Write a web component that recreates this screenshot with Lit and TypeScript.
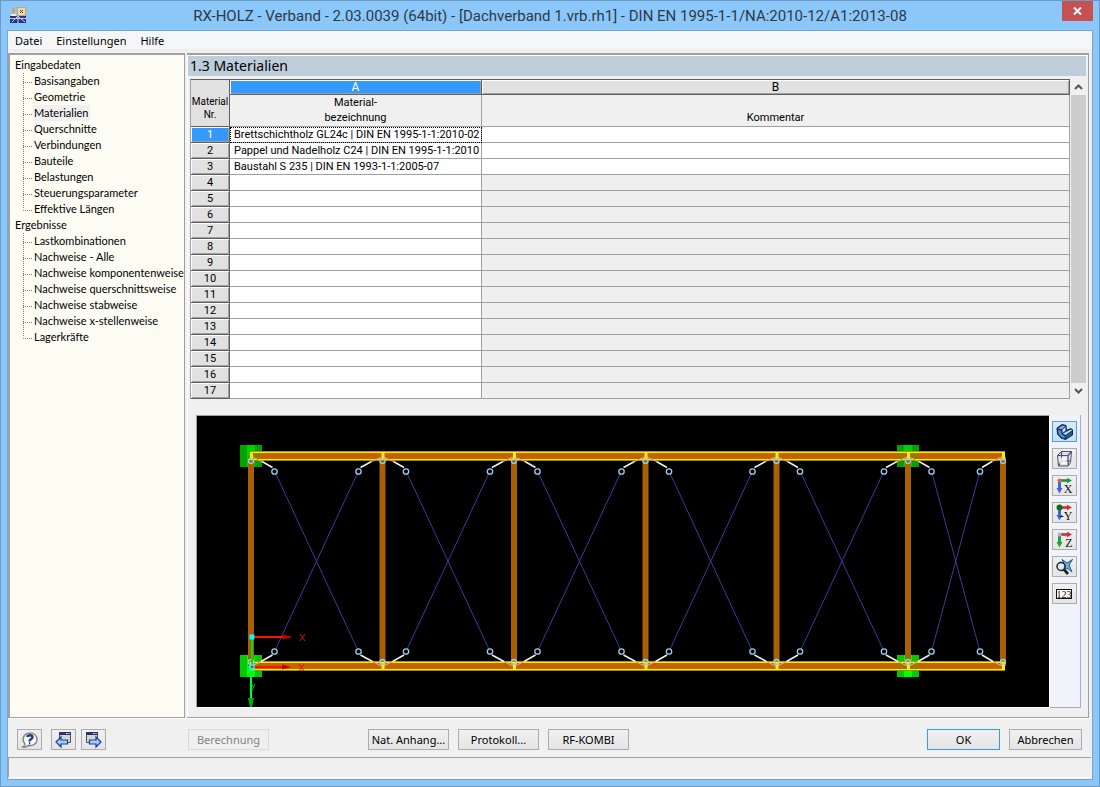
import { LitElement, html, css, svg } from "lit";
import { customElement, state } from "lit/decorators.js";

interface TreeGroup { label: string; items: string[]; }

const TREE: TreeGroup[] = [
  { label: "Eingabedaten", items: ["Basisangaben", "Geometrie", "Materialien", "Querschnitte", "Verbindungen", "Bauteile", "Belastungen", "Steuerungsparameter", "Effektive Längen"] },
  { label: "Ergebnisse", items: ["Lastkombinationen", "Nachweise - Alle", "Nachweise komponentenweise", "Nachweise querschnittsweise", "Nachweise stabweise", "Nachweise x-stellenweise", "Lagerkräfte"] },
];

const MATERIALS = [
  "Brettschichtholz GL24c | DIN EN 1995-1-1:2010-02",
  "Pappel und Nadelholz C24 | DIN EN 1995-1-1:2010",
  "Baustahl S 235 | DIN EN 1993-1-1:2005-07",
];
const ROW_COUNT = 17;

const axes = (down: string, right: string, origin: string, letter: string, originSize: number) => svg`
  <path d="M4.500 4V12" stroke=${down} stroke-width="3"/>
  <path d="M1.500 11h6l-3 5.500z" fill=${down}/>
  <path d="M5 3.500H13" stroke=${right} stroke-width="2.600"/>
  <path d="M12 .8v5.400l5-2.700z" fill=${right}/>
  <circle cx="4.500" cy="3.500" r=${originSize} fill=${origin}/>
  <text x="17.500" y="15.500" text-anchor="end" font-size="12" font-family="Liberation Serif, serif" fill="#111">${letter}</text>`;

const VIEW_TOOLS = [
  { label: "Volumenmodell", icon: svg`
    <path d="M2 5L7 1.500l4 1 .5 5 4.500-2 1.500 1.500v5L10.500 16.500 6 15 2.500 11z" fill="#1b3768" stroke="#14203c" stroke-linejoin="round"/>
    <path d="M3 5.500l4.500-3 3 .8-4 3z" fill="#7fb3e6"/>
    <path d="M7.500 6.500l3-2.200v3.500l-3 2z" fill="#c2e0fa"/>
    <path d="M8 10.500l8-4 1 1-6.500 4.500z" fill="#b4d8f8"/>
    <path d="M3 6.800l3 1 .5 3.500 3 1.700v2.500l-3-1.200-3-3.300z" fill="#4b8fd6"/>
    <path d="M11 13l6-4v2.500l-6 4z" fill="#2c5c9c"/>` },
  { label: "Drahtmodell", icon: svg`
    <path d="M6.500 1.500h10l-1 11-2.500 3.500h-9.500l-1-10.500z" fill="#dde2ec" stroke="#4c5365" stroke-linejoin="round"/>
    <path d="M2.500 5.500h10.500l.3 10.500M13 5.500l3.500-4M6.500 1.500v9.500M3.500 16l3-5h9" fill="none" stroke="#4c5365" stroke-width="1.200"/>
    <path d="M4.500 7.500h7v6.500h-6.500z" fill="#fff" opacity=".75"/>` },
  { label: "Ansicht in X", icon: axes("#3869d8", "#1a9c35", "#e85a5a", "X", 2) },
  { label: "Ansicht gegen Y", icon: axes("#3869d8", "#d32a37", "#126d1c", "-Y", 3) },
  { label: "Ansicht in Z", icon: axes("#19a92c", "#d32a37", "#9db8e8", "Z", 2) },
  { label: "Ganze Struktur", icon: svg`
    <path d="M7 1.500l5 3.500 5.500-3.500-3.500 5.500 3 7-5-4-5 3 3-5.500z" fill="#66aee8" stroke="#1f5996"/>
    <circle cx="6" cy="8.500" r="4" fill="#dce9f2" fill-opacity=".7" stroke="#222" stroke-width="1.500"/>
    <path d="M9 11.500l4 4.500" stroke="#222" stroke-width="2.800"/>` },
  { label: "Nummerierung", icon: svg`
    <rect x="1.500" y="4.500" width="15" height="9" fill="#fff" stroke="#111"/>
    <text x="9" y="12.500" text-anchor="middle" font-size="10" font-family="Liberation Serif, serif" fill="#111">123</text>` },
];

/* Frame geometry in model view units */
const COLUMNS = [251, 382.5, 514, 645.5, 776.5, 908, 1003];
const SUPPORTS = [251, 908];

@customElement("bracing-view")
export class BracingView extends LitElement {
  static styles = css`
    :host { display: block; background: #000; }
    .scene { display: block; width: 100%; height: 100%; }
  `;

  private support(x: number, y: number, bright: boolean) {
    return svg`
      <rect x=${x - 11} y=${y} width="22" height="22" fill=${bright ? "#00ca00" : "#00a400"}/>
      <rect x=${x - 4} y=${y} width="8" height="22" fill=${bright ? "#00ff00" : "#00d000"}/>`;
  }

  private bay(left: number, right: number) {
    const a = left + 23.5;
    const b = right - (right > 1000 ? 23 : 24);
    return svg`
      <path d="M${a} 471L${b} 651.500M${b} 471L${a} 651.500" stroke="#3c3c98" fill="none"/>
      <path d="M${left + 11} 461.500L${a - 2} 467.500M${right - 11} 461.500L${b + 2} 467.500M${left + 10} 661.500L${a - 2} 655M${right - 10} 661.500L${b + 2} 655" stroke="#f0f0f0" stroke-width="1.500" fill="none"/>
      <path d="M${left + 1} 457L${left + 11} 461.500M${right - 1} 457L${right - 11} 461.500M${left + 1} 666L${left + 10} 661.500M${right - 1} 666L${right - 10} 661.500" stroke="#eaa26c" stroke-width="1.300" fill="none"/>
      ${[a, b].map((x) => svg`
        <circle cx=${x} cy="471.500" r="2.700" fill="#000" stroke="#a0cbe8" stroke-width="1.300"/>
        <circle cx=${x} cy="651.500" r="2.700" fill="#000" stroke="#a0cbe8" stroke-width="1.300"/>`)}`;
  }

  private beam(y: number) {
    return svg`
      <rect x="250" y=${y} width="755" height="10" fill="#c46200"/>
      <rect x="250" y=${y} width="755" height="1" fill="#a89a00"/>
      <rect x="250" y=${y + 1} width="755" height="1" fill="#ffee00"/>
      <rect x="250" y=${y + 8} width="755" height="1" fill="#ffee00"/>
      <rect x="250" y=${y + 9} width="755" height="1" fill="#8f8f00"/>`;
  }

  render() {
    return html`<svg class="scene" viewBox="197 416 852 291" role="img" aria-label="Dachverband">
      ${SUPPORTS.map((x) => [this.support(x, 445, false), this.support(x, 655, true)])}
      ${COLUMNS.map((x) => svg`<rect x=${x - 3} y="457" width="6" height="209" fill="#a86000"/>`)}
      ${this.beam(451)}${this.beam(661)}
      ${SUPPORTS.map((x) => svg`
        <rect x=${x === 251 ? 251 : x - 11} y="453" width=${x === 251 ? 11 : 22} height="6" fill="#a07400"/>
        <rect x=${x === 251 ? 251 : x - 11} y="663" width=${x === 251 ? 11 : 22} height="6" fill="#a07400"/>`)}
      ${COLUMNS.slice(1).map((x, i) => this.bay(COLUMNS[i], x))}
      ${COLUMNS.map((x) => svg`
        <rect x=${x - 1} y="452" width="3" height="8" fill="#ffec00"/>
        <rect x=${x - 1} y="663" width="3" height="7" fill="#ffec00"/>
        <circle cx=${x} cy="461" r="2.500" fill="none" stroke="#a0cbe8" stroke-width="1.300"/>
        <circle cx=${x} cy="662" r="2.500" fill="none" stroke="#a0cbe8" stroke-width="1.300"/>`)}
      <rect x="251" y="637" width="2" height="30" fill="#00e020"/>
      <rect x="250" y="667" width="2" height="33" fill="#00ff20"/>
      <path d="M248 698h6l-2 9h-2z" fill="#00b000"/>
      <path d="M251 637H284M251 667H283" stroke="#ff1000" stroke-width="2"/>
      <path d="M283 634.500L293 637L283 639.500zM282 664.500L291 667L282 669.500z" fill="#c00000"/>
      <path d="M300 634L305 641M305 634L300 641M299 664L304 671M304 664L299 671" stroke="#e01000"/>
      <path d="M252 684l1 3M255 684l-3 7" stroke="#00b020" fill="none"/>
      <rect x="249.500" y="634.500" width="5" height="5" fill="#00ffff"/>
      <rect x="250" y="665" width="4" height="5" fill="none" stroke="#00ffff" stroke-width="1.500"/>
    </svg>`;
  }
}

@customElement("app-root")
export class AppRoot extends LitElement {
  static styles = css`
    :host { display: block; height: 100vh; color: #000; font: 11px/16px Lato, "Noto Sans", sans-serif; }
    * { box-sizing: border-box; }
    button { font: inherit; color: inherit; margin: 0; padding: 0; }
    .window { height: 100%; display: flex; flex-direction: column; background: #8cc7fa; border: 1px solid #6b9ac4; padding: 0 6px 6px; }
    .titlebar { flex: none; height: 29px; display: grid; grid-template-columns: 31px 1fr 31px; align-items: start; }
    .app-icon { display: block; margin: 5px 0 0 2px; }
    .title { margin: 0; text-align: center; font: 15px/30px Roboto, "Noto Sans", sans-serif; color: #2c3a48; white-space: nowrap; }
    .close { width: 31px; height: 20px; border: 0; background: #c75050; display: grid; place-items: center; }
    .client { flex: 1; min-height: 0; display: flex; flex-direction: column; background: #f0f0f0; border: 1px solid #75a7d4; }
    .menu { flex: none; display: flex; gap: 14px; height: 19px; margin-bottom: 3px; padding: 0 7px; background: #f5f6f7; border-bottom: 1px solid #ececec; font: 11px/19px "Noto Sans", sans-serif; }
    .menu-item { border: 0; background: none; }
    .main { flex: 1; min-height: 0; display: grid; grid-template-columns: 177px 1fr; gap: 2px; padding-right: 3px; border-bottom: 1px solid #fff; }
    .tree { margin: 0; padding: 2px 0 0 5px; background: #fcfcf3; border: 1px solid #a0a0a0; border-width: 2px 1px 1px 2px; white-space: nowrap; overflow: hidden; }
    .group { list-style: none; margin: 0; padding: 0; }
    .leaves { list-style: none; margin: 0; padding: 0 0 0 8px; }
    .leaf { display: grid; grid-template-columns: 10px max-content; height: 16px; background: repeating-linear-gradient(#808080 0 1px, transparent 1px 2px) 0 0 / 1px 100% no-repeat; }
    .leaf:last-child { background-size: 1px 8px; }
    .leaf::before { content: ""; height: 9px; width: 9px; border-bottom: 1px dotted #808080; }
    .link { color: inherit; text-decoration: none; padding: 0 2px 0 1px; }
    .link.current { background: #f0f0f0; }
    .panel { min-width: 0; min-height: 0; display: flex; flex-direction: column; border: 1px solid #a0a0a0; border-width: 2px 1px 1px 0; box-shadow: inset 1px 1px #fff; padding: 1px 2px 9px 1px; }
    .heading { flex: none; margin: 0 0 3px; padding-left: 2px; background: #bfccda; font: 14px/20px "Noto Sans", sans-serif; }
    .grid-box { flex: none; display: grid; grid-template-columns: 1fr 15px; gap: 1px; margin-left: 2px; }
    .grid { width: 100%; border-collapse: separate; border-spacing: 0; table-layout: fixed; font: 11px/15px Roboto, "Liberation Sans", sans-serif; border-left: 1px solid #a0a0a0; border-top: 1px solid #606060; }
    .grid th, .grid td { padding: 0; font-weight: 400; border-right: 1px solid #a0a0a0; border-bottom: 1px solid #a0a0a0; overflow: hidden; white-space: nowrap; }
    .col-nr { width: 39px; }
    .col-a { width: 252px; }
    .grid .corner { background: #e1e1e1; font-size: 10px; line-height: 13px; vertical-align: bottom; padding-bottom: 5px; border-color: #606060; }
    .grid .letter { height: 15px; line-height: 13px; font-size: 12px; background: #e1e1e1; border-color: #606060; box-shadow: inset 1px 1px #fff, inset -1px -1px #a0a0a0; }
    .grid .letter.active, .grid .num.active { background: #3399ff; color: #fff; }
    .grid .name { height: 32px; line-height: 15px; vertical-align: bottom; padding-bottom: 1px; }
    .grid .num { height: 16px; font-size: 11px; line-height: 14px; background: #e1e1e1; border-color: #606060; box-shadow: inset 1px 1px #fff, inset -1px -1px #a0a0a0; }
    .grid td { height: 16px; background: #fff; padding-left: 4px; }
    .grid .off { background: #efefef; }
    .grid .focus { outline: 1px dotted #000; outline-offset: -1px; }
    .scroll { display: grid; grid-template-rows: 16px 1fr 16px; }
    .arrow { border: 0; background: none; display: grid; place-items: center; }
    .thumb { background: #cdcdcd; }
    .view-box { flex: 1; min-height: 0; display: grid; grid-template-columns: 1fr 31px; margin: 16px 5px 0 8px; }
    .view { min-width: 0; min-height: 0; border: 1px solid #a0a0a0; border-right-color: #fff; border-bottom-color: #fff; }
    .tools { display: flex; flex-direction: column; gap: 6px; padding: 6px 0 0 2px; background: #f0f3f9; border: 1px solid #a6a6ee; border-width: 0 1px 1px 0; }
    .icon-btn { flex: none; width: 25px; height: 21px; border: 1px solid #acacac; background: linear-gradient(#f0f0f0, #e5e5e5); display: grid; place-items: center; }
    .icon-btn.pressed { border-color: #569de5; background: linear-gradient(#d8eafc, #c4e0fc); }
    .icon { display: block; }
    .actions { flex: none; display: flex; align-items: center; height: 38px; padding: 3px 10px 0 9px; }
    .set { display: flex; gap: 9px; }
    .nav-set { gap: 5px; margin-left: 9px; }
    .calc { margin-left: 82px; }
    .extras { margin-left: 99px; }
    .confirm { margin-left: auto; }
    .btn { width: 81px; height: 21px; border: 1px solid #acacac; background: linear-gradient(#f0f0f0, #e5e5e5); font: 11px/16px "Noto Sans", sans-serif; white-space: nowrap; }
    .btn.end { width: 73px; }
    .btn.default { border-color: #3399ff; }
    .btn:disabled { color: #838383; border-color: #d9d9d9; background: #efefef; }
    .status { flex: none; height: 21px; margin: 0 1px 1px 0; border-top: 1px solid #a0a0a0; border-left: 1px solid #a0a0a0; border-bottom: 1px solid #fff; }
  `;

  @state() private page = "Materialien";

  private renderTree() {
    return html`<nav class="tree" aria-label="Navigator">
      ${TREE.map((g) => html`<div class="group">${g.label}
        <ul class="leaves">
          ${g.items.map((item) => html`<li class="leaf"><a class="link ${item === this.page ? "current" : ""}" href="#" @click=${(e: Event) => { e.preventDefault(); this.page = item; }}>${item}</a></li>`)}
        </ul></div>`)}
    </nav>`;
  }

  private renderTable() {
    const rows = Array.from({ length: ROW_COUNT }, (_, i) => i);
    return html`<div class="grid-box">
      <table class="grid">
        <colgroup><col class="col-nr" /><col class="col-a" /><col /></colgroup>
        <thead>
          <tr><th class="corner" rowspan="2" scope="col">Material<br />Nr.</th><th class="letter active">A</th><th class="letter">B</th></tr>
          <tr><th class="name" scope="col">Material-<br />bezeichnung</th><th class="name" scope="col">Kommentar</th></tr>
        </thead>
        <tbody>
          ${rows.map((i) => html`<tr>
            <th class="num ${i === 0 ? "active" : ""}" scope="row">${i + 1}</th>
            <td class=${i === 0 ? "focus" : ""}>${MATERIALS[i] ?? ""}</td>
            <td class=${i < MATERIALS.length ? "" : "off"}></td>
          </tr>`)}
        </tbody>
      </table>
      <div class="scroll">
        <button class="arrow" aria-label="Nach oben"><svg class="icon" width="9" height="6" viewBox="0 0 9 6"><path d="M1 5L4.500 1.500 8 5" fill="none" stroke="#555" stroke-width="2"/></svg></button>
        <div class="thumb"></div>
        <button class="arrow" aria-label="Nach unten"><svg class="icon" width="9" height="6" viewBox="0 0 9 6"><path d="M1 1L4.500 4.500 8 1" fill="none" stroke="#555" stroke-width="2"/></svg></button>
      </div>
    </div>`;
  }

  private renderActions() {
    const page = svg`<path d="M5.500 1.500h11v10h-11z" fill="#d5d5d5" stroke="#555"/><path d="M5 1h12v3h-12z" fill="#26356f"/><path d="M12 2h1.500v1h-1.500zM14.500 2h1v1h-1z" fill="#fff"/>`;
    return html`<div class="actions">
      <button class="icon-btn" aria-label="Hilfe"><svg class="icon" width="19" height="18" viewBox="0 0 19 18">
        <path d="M3 16c2 .5 4 0 5-1.500 5 1 9-2 9-6s-3-6.500-7-6.500-7 3-7 6c0 2.500 1 4 2 5 0 1.500-1 2.500-2 3z" fill="#f7f7f7" stroke="#888" stroke-width="1.500"/>
        <path d="M7.300 6c.5-2.300 5.200-2.500 5.200 .3 0 2-2.900 2-3.100 4M9 12.200h1.200" fill="none" stroke="#1f3f7c" stroke-width="2.400"/></svg></button>
      <div class="set nav-set">
        <button class="icon-btn" aria-label="Vorherige Maske"><svg class="icon" width="19" height="18" viewBox="0 0 19 18">${page}<path d="M2 11l5-5v3h6.500v4h-6.500v3z" fill="#9fd0fa" stroke="#1c3f94" stroke-width="1.200"/></svg></button>
        <button class="icon-btn" aria-label="Nächste Maske"><svg class="icon" width="19" height="18" viewBox="0 0 19 18"><g transform="translate(-3 0)">${page}</g><path d="M17 11l-5-5v3h-6.500v4h6.500v3z" fill="#9fd0fa" stroke="#1c3f94" stroke-width="1.200"/></svg></button>
      </div>
      <button class="btn calc" disabled>Berechnung</button>
      <div class="set extras">
        <button class="btn">Nat. Anhang...</button>
        <button class="btn">Protokoll...</button>
        <button class="btn">RF-KOMBI</button>
      </div>
      <div class="set confirm">
        <button class="btn end default">OK</button>
        <button class="btn end">Abbrechen</button>
      </div>
    </div>`;
  }

  render() {
    return html`<div class="window">
      <header class="titlebar">
        <svg class="app-icon" width="18" height="18" viewBox="0 0 18 18">
          <path d="M1 10h16v7H1z" fill="#27357e"/>
          <path d="M1 12.500h16M3 16l4-4 2-2 3 3 4 3M9 10v7" stroke="#c8d4ee" fill="none"/>
          <rect x="8.500" y="1.500" width="8" height="8" fill="#e0ddb0" stroke="#e39a62"/>
          <path d="M11 4l3 3M14 4l-3 3" stroke="#444"/><path d="M3 2h3v4h-1v2h-2z" fill="#d99f70"/><path d="M2 8h5v2h-5z" fill="#e8eef4"/>
        </svg>
        <h1 class="title">RX-HOLZ - Verband - 2.03.0039 (64bit) - [Dachverband 1.vrb.rh1] - DIN EN 1995-1-1/NA:2010-12/A1:2013-08</h1>
        <button class="close" aria-label="Schließen"><svg class="icon" width="9" height="8" viewBox="0 0 9 8"><path d="M1 .5l7 7M8 .5l-7 7" stroke="#fff" stroke-width="2"/></svg></button>
      </header>
      <div class="client">
        <div class="menu">
          <button class="menu-item">Datei</button><button class="menu-item">Einstellungen</button><button class="menu-item">Hilfe</button>
        </div>
        <div class="main">
          ${this.renderTree()}
          <section class="panel">
            <h2 class="heading">1.3 Materialien</h2>
            ${this.renderTable()}
            <div class="view-box">
              <bracing-view class="view"></bracing-view>
              <div class="tools">
                ${VIEW_TOOLS.map((t, i) => html`<button class="icon-btn ${i === 0 ? "pressed" : ""}" aria-label=${t.label}><svg class="icon" width="19" height="18" viewBox="0 0 19 18">${t.icon}</svg></button>`)}
              </div>
            </div>
          </section>
        </div>
        ${this.renderActions()}
        <div class="status"></div>
      </div>
    </div>`;
  }
}
